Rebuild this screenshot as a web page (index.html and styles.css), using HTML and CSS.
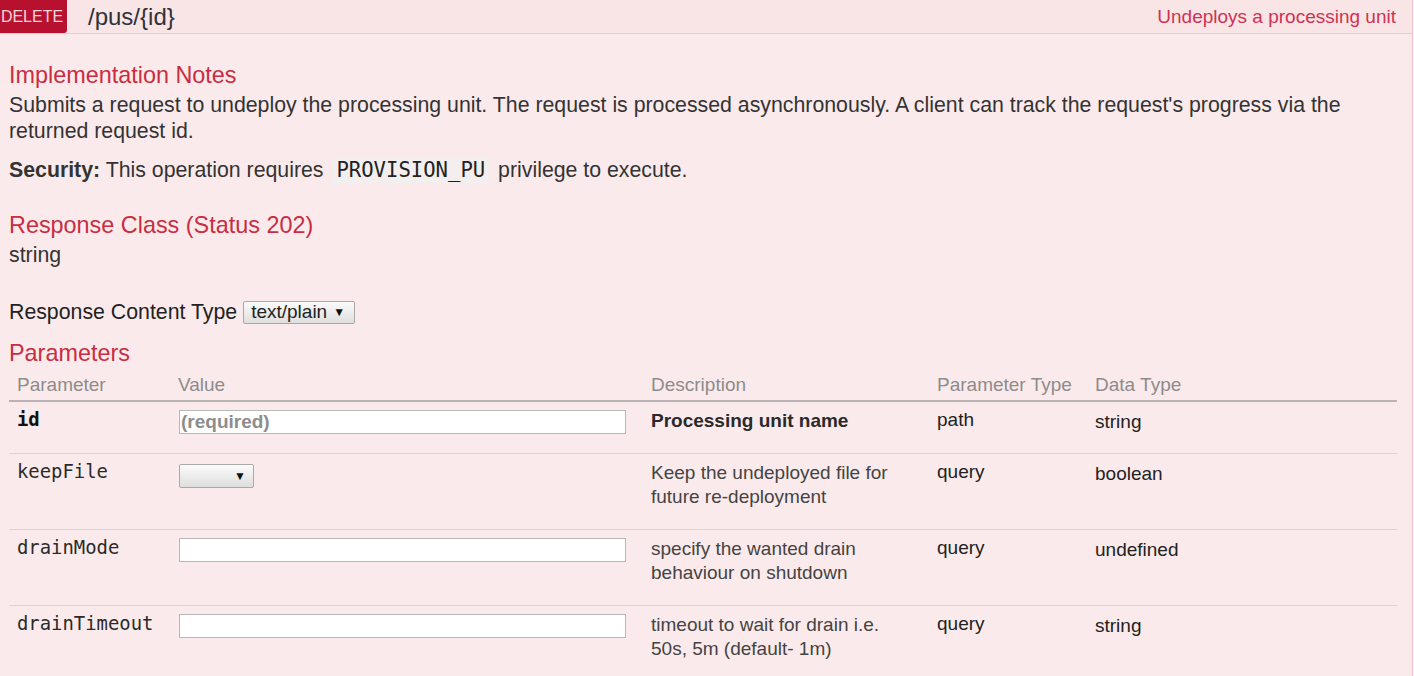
FILE: index.html
```html
<!DOCTYPE html>
<html>
<head>
<meta charset="utf-8">
<link rel="stylesheet" href="styles.css">
</head>
<body>
<div class="operation">
  <div class="op-heading">
    <span class="method">DELETE</span>
    <span class="path">/pus/{id}</span>
    <span class="summary">Undeploys a processing unit</span>
  </div>
  <div class="op-content">
    <h4 class="section-title first">Implementation Notes</h4>
    <p class="notes">Submits a request to undeploy the processing unit. The request is processed asynchronously. A client can track the request's progress via the returned request id.</p>
    <p class="security"><strong>Security:</strong> This operation requires <code class="code">PROVISION_PU</code> privilege to execute.</p>

    <h4 class="section-title response-title">Response Class (Status 202)</h4>
    <div class="model">string</div>

    <div class="content-type">
      <label class="ct-label">Response Content Type</label>
      <span class="select ct-select">text/plain <span class="arrow">▼</span></span>
    </div>

    <h4 class="section-title params-title">Parameters</h4>
    <table class="params">
      <colgroup>
        <col class="c-name"><col class="c-value"><col class="c-desc"><col class="c-ptype"><col class="c-dtype">
      </colgroup>
      <thead>
        <tr>
          <th>Parameter</th><th>Value</th><th>Description</th><th>Parameter Type</th><th>Data Type</th>
        </tr>
      </thead>
      <tbody>
        <tr>
          <td class="pname required">id</td>
          <td class="value"><span class="input placeholder">(required)</span></td>
          <td class="desc strong">Processing unit name</td>
          <td class="ptype">path</td>
          <td class="dtype">string</td>
        </tr>
        <tr class="tall">
          <td class="pname">keepFile</td>
          <td class="value"><span class="select bool-select"><span class="arrow">▼</span></span></td>
          <td class="desc">Keep the undeployed file for future re-deployment</td>
          <td class="ptype">query</td>
          <td class="dtype">boolean</td>
        </tr>
        <tr class="tall">
          <td class="pname">drainMode</td>
          <td class="value"><span class="input"></span></td>
          <td class="desc">specify the wanted drain behaviour on shutdown</td>
          <td class="ptype">query</td>
          <td class="dtype">undefined</td>
        </tr>
        <tr class="tall">
          <td class="pname">drainTimeout</td>
          <td class="value"><span class="input"></span></td>
          <td class="desc">timeout to wait for drain i.e. 50s, 5m (default- 1m)</td>
          <td class="ptype">query</td>
          <td class="dtype">string</td>
        </tr>
      </tbody>
    </table>
  </div>
</div>
</body>
</html>
```

FILE: styles.css
```css
html, body {
  margin: 0;
  padding: 0;
  background: #ffffff;
}

body {
  font-family: "Liberation Sans", Arial, sans-serif;
  color: #333333;
  height: 676px;
  overflow: hidden;
}

.operation {
  width: 1413px;
  box-sizing: border-box;
  border-right: 1px solid #f4c3c9;
  background: #fbeaeb;
  min-height: 676px;
}

.op-heading {
  display: flex;
  align-items: center;
  height: 33px;
  background: #f9e4e6;
  border-bottom: 1px solid #f4c7cc;
}

.method {
  display: flex;
  align-items: center;
  justify-content: center;
  width: 67px;
  height: 33px;
  box-sizing: border-box;
  padding-right: 3px;
  background: #b7112f;
  color: #f7d3da;
  font-size: 16px;
  border-bottom-right-radius: 3px;
}

.path {
  margin-left: 21px;
  font-size: 24px;
  color: #2f3338;
}

.summary {
  margin-left: auto;
  margin-right: 16px;
  font-size: 19px;
  color: #cf3352;
}

.op-content {
  padding: 0 16px 0 9px;
}

.section-title {
  margin: 0;
  font-size: 23.4px;
  line-height: 25px;
  font-weight: normal;
  color: #c92d42;
}

.section-title.first {
  padding-top: 29px;
}

.notes {
  margin: 4px 0 0;
  font-size: 21.3px;
  line-height: 26px;
}

.security {
  margin: 13px 0 0;
  font-size: 21.3px;
  line-height: 26px;
}

.code {
  font-family: "DejaVu Sans Mono", monospace;
  font-size: 20.6px;
  background: #f4efef;
  padding: 1px 4px;
  margin: 0 3px;
  color: #222;
}

.response-title {
  margin-top: 30px;
}

.model {
  margin-top: 4px;
  font-size: 21.3px;
  line-height: 26px;
}

.content-type {
  display: flex;
  align-items: center;
  margin-top: 31px;
  height: 26px;
  font-size: 21.3px;
}

.ct-label {
  color: #222;
}

.select {
  display: inline-flex;
  align-items: center;
  box-sizing: border-box;
  height: 23px;
  border: 1px solid #a9a9a9;
  border-radius: 2px;
  background: linear-gradient(#fbfbfb, #dedede);
  color: #222;
}

.arrow {
  font-size: 12px;
  color: #111;
}

.ct-select {
  margin-left: 6px;
  width: 112px;
  padding-left: 7px;
  font-size: 19px;
  gap: 6px;
}

.params-title {
  margin-top: 16px;
}

.params {
  margin-top: 3px;
  width: 1388px;
  border-collapse: collapse;
  table-layout: fixed;
}

.c-name { width: 161px; }
.c-value { width: 473px; }
.c-desc { width: 286px; }
.c-ptype { width: 158px; }
.c-dtype { width: 310px; }

.params th {
  text-align: left;
  font-weight: normal;
  font-size: 19px;
  line-height: 24px;
  color: #8c8c8c;
  padding: 4px 8px 3px;
  border-bottom: 2px solid #b9b3b4;
}

.params td {
  vertical-align: top;
  padding: 6px 8px 21px;
  font-size: 19px;
  line-height: 24px;
  border-bottom: 1px solid #dcd3d4;
}

.params tr:last-child td {
  border-bottom: none;
}

.params td.pname {
  font-family: "DejaVu Sans Mono", monospace;
  font-size: 18.9px;
  color: #2a2a2a;
  padding-top: 5px;
  padding-bottom: 22px;
}

.params td.pname.required {
  font-weight: bold;
  color: #111;
}

.params td.value {
  padding: 8px 8px 19px 9px;
}

.params td.desc {
  padding: 7px 22px 20px 8px;
  color: #444;
}

.params td.desc.strong {
  font-weight: bold;
  color: #2a2a2a;
}

.params td.ptype {
  padding-top: 6px;
  padding-bottom: 21px;
  color: #222;
}

.params td.dtype {
  padding-top: 8px;
  padding-bottom: 19px;
  color: #222;
}

.input {
  display: block;
  box-sizing: border-box;
  width: 447px;
  height: 24px;
  background: #ffffff;
  border: 1px solid #b9b9b9;
  font-size: 19px;
  line-height: 22px;
  padding-left: 1px;
}

.placeholder {
  color: #8d8d8d;
  font-weight: bold;
}

.bool-select {
  width: 75px;
  justify-content: flex-end;
  padding-right: 7px;
  height: 24px;
}
```
